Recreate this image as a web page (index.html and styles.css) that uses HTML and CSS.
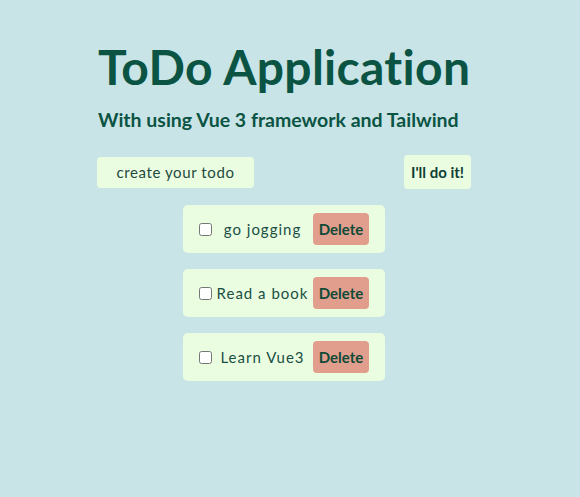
FILE: index.html
```html
<!DOCTYPE html>
<html>
<head>
<meta charset="utf-8">
<link rel="stylesheet" href="styles.css">
</head>
<body>
<main class="app">
  <h1 class="title">ToDo Application</h1>
  <h2 class="subtitle">With using Vue 3 framework and Tailwind</h2>
  <form class="new-todo">
    <input class="new-input" type="text" placeholder="create your todo">
    <button class="add-btn" type="button">I'll do it!</button>
  </form>
  <ul class="list">
    <li class="card"><input class="check" type="checkbox"><span class="label">go jogging</span><button class="del" type="button">Delete</button></li>
    <li class="card"><input class="check" type="checkbox"><span class="label">Read a book</span><button class="del" type="button">Delete</button></li>
    <li class="card"><input class="check" type="checkbox"><span class="label">Learn Vue3</span><button class="del" type="button">Delete</button></li>
  </ul>
</main>
</body>
</html>
```
FILE: styles.css
```css
html, body {
  margin: 0;
  padding: 0;
  background: #c9e4e7;
}
body {
  font-family: "Lato", "Open Sans", sans-serif;
  color: #0f5443;
}
.app {
  width: 374px;
  margin-left: 97px;
  padding-top: 39px;
  display: flex;
  flex-direction: column;
}
.title {
  margin: 0;
  font-size: 48px;
  font-weight: 700;
  line-height: 56px;
  letter-spacing: 0.3px;
  color: #0b5444;
  padding-left: 1px;
}
.subtitle {
  margin: 12px 0 0 0;
  font-size: 19.5px;
  font-weight: 700;
  line-height: 26px;
  color: #0b5444;
  padding-left: 1px;
}
.new-todo {
  margin-top: 22px;
  display: flex;
  justify-content: space-between;
  align-items: center;
}
.new-input {
  width: 157px;
  height: 31px;
  box-sizing: border-box;
  border: none;
  border-radius: 4px;
  background: #ebfde1;
  font-family: inherit;
  font-size: 15px;
  text-align: center;
  color: #0f5443;
  outline: none;
  padding: 0;
}
.new-input::placeholder {
  color: #1f4a40;
  letter-spacing: 0.6px;
}
.add-btn {
  height: 34px;
  width: 67px;
  border: none;
  border-radius: 4px;
  background: #ebfde1;
  font-family: inherit;
  font-weight: 700;
  font-size: 15px;
  color: #0f3f33;
  padding: 0;
}
.list {
  list-style: none;
  margin: 16px 0 0 0;
  padding: 0;
  display: flex;
  flex-direction: column;
  align-items: center;
  gap: 16px;
}
.card {
  width: 202px;
  height: 48px;
  box-sizing: border-box;
  padding: 0 16px;
  background: #ebfde1;
  border-radius: 5px;
  display: flex;
  align-items: center;
}
.check {
  width: 13px;
  height: 13px;
  margin: 0;
}
.label {
  flex: 1;
  text-align: center;
  font-size: 15px;
  letter-spacing: 1px;
  color: #1a4f44;
}
.del {
  width: 56px;
  height: 32px;
  border: none;
  border-radius: 4px;
  background: #e29e8c;
  font-family: inherit;
  font-weight: 700;
  font-size: 15px;
  color: #0f4a38;
  padding: 0;
}
```
